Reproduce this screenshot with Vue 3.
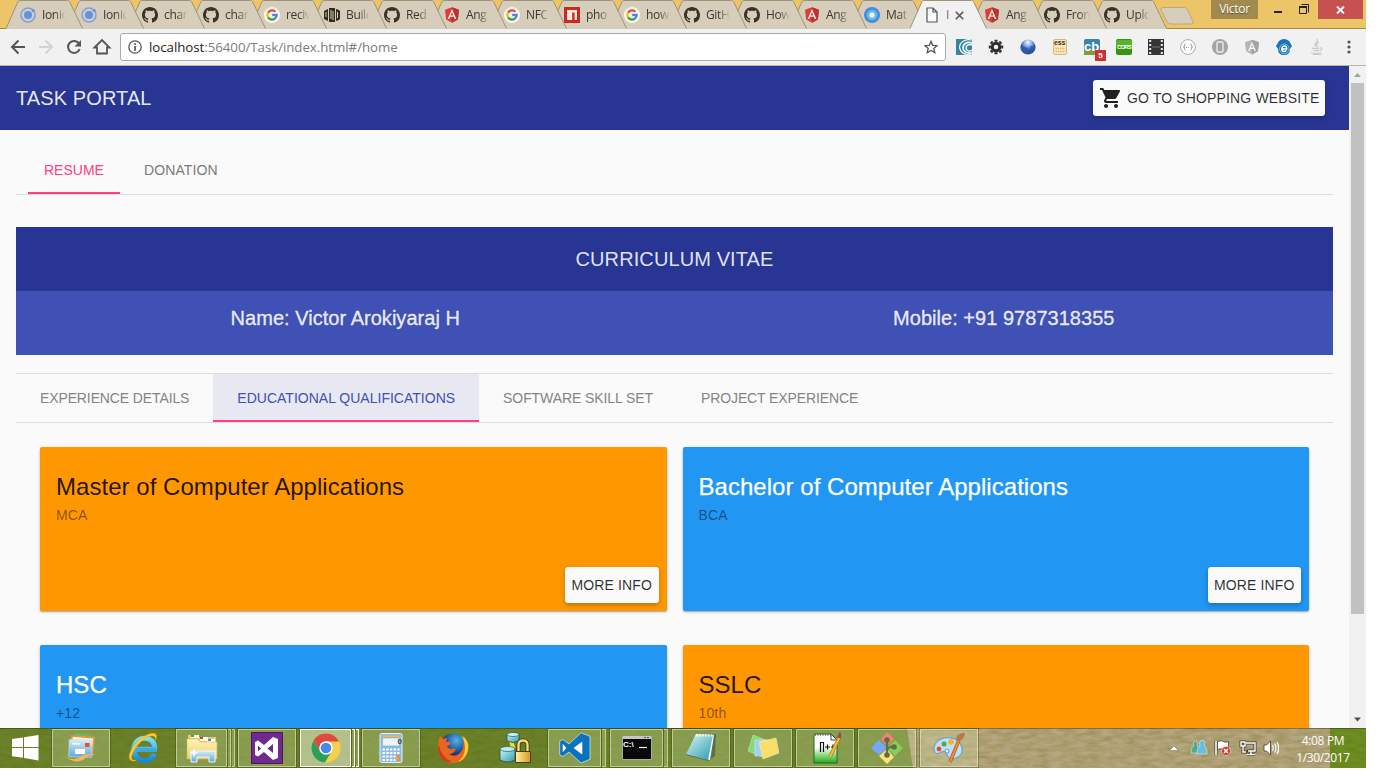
<script setup>
const tabs = [
  { icon: 'ionic', text: 'Ionic', w: 61 },
  { icon: 'ionic', text: 'Ionic', w: 61 },
  { icon: 'github', text: 'chart', w: 61 },
  { icon: 'github', text: 'chart', w: 61 },
  { icon: 'google', text: 'recive', w: 60 },
  { icon: 'build', text: 'Build', w: 60 },
  { icon: 'github', text: 'Red', w: 60 },
  { icon: 'angular', text: 'Ang', w: 60 },
  { icon: 'google', text: 'NFC', w: 60 },
  { icon: 'npm', text: 'pho', w: 60 },
  { icon: 'google', text: 'how', w: 60 },
  { icon: 'github', text: 'GitH', w: 60 },
  { icon: 'github', text: 'How', w: 60 },
  { icon: 'angular', text: 'Ang', w: 60 },
  { icon: 'material', text: 'Mat', w: 60 },
  { icon: 'page', text: 'I', w: 60, active: true },
  { icon: 'angular', text: 'Ang', w: 60 },
  { icon: 'github', text: 'Fron', w: 60 },
  { icon: 'github', text: 'Uplo', w: 60 }
]
const extensions = ['swirl', 'gear', 'globe', 'css', 'cb', 'cors', 'film', 'braces', 'phone', 'batshield', 'teamie', 'java']
const glyphs = { css: 'ess', cb: 'cb', cors: 'CORS', calc: '0', cmd: 'C:\\' }
const subTabs = [
  { text: 'EXPERIENCE DETAILS', ls: -0.12 },
  { text: 'EDUCATIONAL QUALIFICATIONS', ls: 0.01, on: true },
  { text: 'SOFTWARE SKILL SET', ls: -0.09 },
  { text: 'PROJECT EXPERIENCE', ls: -0.1 }
]
const cards = [
  { title: 'Master of Computer Applications', sub: 'MCA', tone: 'orange' },
  { title: 'Bachelor of Computer Applications', sub: 'BCA', tone: 'blue' },
  { title: 'HSC', sub: '+12', tone: 'blue' },
  { title: 'SSLC', sub: '10th', tone: 'orange' }
]
const apps = [
  { icon: 'mail', kind: 'open' },
  { icon: 'ie', kind: 'plain' },
  { icon: 'explorer', kind: 'open stack3' },
  { icon: 'vs', kind: 'open' },
  { icon: 'chrome', kind: 'open current stack3' },
  { icon: 'calc', kind: 'open' },
  { icon: 'firefox', kind: 'plain' },
  { icon: 'dblock', kind: 'plain' },
  { icon: 'vscode', kind: 'open stack' },
  { icon: 'cmd', kind: 'open stack' },
  { icon: 'notepad', kind: 'open' },
  { icon: 'sticky', kind: 'open' },
  { icon: 'npp', kind: 'open' },
  { icon: 'git', kind: 'open' },
  { icon: 'paint', kind: 'open' }
]
</script>

<template>
  <div class="desktop">
    <svg class="defs" width="0" height="0">
      <defs>
        <linearGradient id="gFolder" x1="0" y1="0" x2="0" y2="1"><stop offset="0" stop-color="#fff3b8" /><stop offset="1" stop-color="#f0cf6c" /></linearGradient>
        <linearGradient id="gIe" x1="0" y1="0" x2="0" y2="1"><stop offset="0" stop-color="#7ee0ff" /><stop offset="1" stop-color="#1588d6" /></linearGradient>
        <linearGradient id="gBlue" x1="0" y1="0" x2="0" y2="1"><stop offset="0" stop-color="#d5ecfa" /><stop offset="1" stop-color="#5ea7dc" /></linearGradient>
        <linearGradient id="gTeal" x1="0" y1="0" x2="1" y2="1"><stop offset="0" stop-color="#d6f6f7" /><stop offset="1" stop-color="#2a9aae" /></linearGradient>
        <linearGradient id="gGold" x1="0" y1="0" x2="1" y2="0"><stop offset="0" stop-color="#fff2a0" /><stop offset="1" stop-color="#d69a18" /></linearGradient>
        <linearGradient id="gNpp" x1="0" y1="0" x2="0" y2="1"><stop offset="0.45" stop-color="#fff" /><stop offset="1" stop-color="#1fae12" /></linearGradient>
        <radialGradient id="gGlobe" cx="0.5" cy="0.2"><stop offset="0" stop-color="#f4f8ff" /><stop offset="0.5" stop-color="#8fb0e8" /><stop offset="1" stop-color="#2a529f" /></radialGradient>
        <radialGradient id="gFox" cx="0.6" cy="0.25"><stop offset="0" stop-color="#4fb6e8" /><stop offset="1" stop-color="#12337d" /></radialGradient>
      </defs>
      <symbol id="i-ionic" viewBox="0 0 16 16"><circle cx="8" cy="8" r="7" fill="none" stroke="#7aa2e3" stroke-width="1.500" /><circle cx="8" cy="8" r="4" fill="#5e92e4" /><circle cx="13.200" cy="3.400" r="1.500" fill="#5e92e4" /></symbol>
      <symbol id="i-github" viewBox="0 0 16 16"><path fill="#3b3127" d="M8 0C3.58 0 0 3.58 0 8c0 3.54 2.29 6.53 5.47 7.59.4.07.55-.17.55-.38 0-.19-.01-.82-.01-1.49-2.01.37-2.53-.49-2.69-.94-.09-.23-.48-.94-.82-1.13-.28-.15-.68-.52-.01-.53.63-.01 1.08.58 1.23.82.72 1.21 1.87.87 2.33.66.07-.52.28-.87.51-1.07-1.78-.2-3.64-.89-3.64-3.95 0-.87.31-1.59.82-2.15-.08-.2-.36-1.02.08-2.12 0 0 .67-.21 2.2.82.64-.18 1.32-.27 2-.27s1.36.09 2 .27c1.53-1.04 2.2-.82 2.2-.82.44 1.1.16 1.92.08 2.12.51.56.82 1.27.82 2.15 0 3.07-1.87 3.75-3.65 3.95.29.25.54.73.54 1.48 0 1.07-.01 1.93-.01 2.2 0 .21.15.46.55.38A8.01 8.01 0 0 0 16 8c0-4.42-3.58-8-8-8z" /></symbol>
      <symbol id="i-google" viewBox="0 0 16 16"><circle cx="8" cy="8" r="8" fill="#fbf6ea" /><g fill="none" stroke-width="2.300"><path d="M4 5.700A4.700 4.700 0 0 1 11.400 4.700" stroke="#e5483b" /><path d="M4 5.600A4.700 4.700 0 0 0 4 10.400" stroke="#f4b912" /><path d="M4 10.300A4.700 4.700 0 0 0 11 11.500" stroke="#37a354" /><path d="M11 11.500A4.700 4.700 0 0 0 12.700 8H8.200" stroke="#4484ee" /></g></symbol>
      <symbol id="i-build" viewBox="0 0 16 16"><path fill="#33291d" d="M0 4l4-2v12l-4-2zM5 1h6v14H5zM12 2l3 1 1 1v8l-1 1-3 1z" /><path stroke="#d6cdba" fill="none" d="M2 5v5M7 3v9M9 4v9M13.500 5v6" /></symbol>
      <symbol id="i-angular" viewBox="0 0 16 16"><path fill="#dd3d39" d="M8 .3l7 2.500-1.100 9.600L8 15.800l-5.900-3.400L1 2.800z" /><path fill="#b93431" d="M8 .3l7 2.500-1.100 9.600L8 15.800z" /><path fill="#f7e9e2" fill-rule="evenodd" d="M8 2L3.600 12h1.700l.9-2.200h3.600l.9 2.200h1.700zM8 5.300l1.200 3.100H6.800z" /></symbol>
      <symbol id="i-npm" viewBox="0 0 16 16"><path fill="#d0271d" d="M0 0h16v16H0z" /><path fill="#f7ebdf" d="M3 3h10v10h-2.400V5.400H8.200V13H3z" /></symbol>
      <symbol id="i-material" viewBox="0 0 16 16"><circle cx="8" cy="8" r="8" fill="#4989e4" /><circle cx="8" cy="8" r="5.300" fill="#5bc0ea" /><circle cx="8" cy="8" r="2.600" fill="#f7f1dd" /></symbol>
      <symbol id="i-page" viewBox="0 0 16 16"><path d="M3.500 1.500h6l4 4v10h-10zM9.500 1.500v4h4" transform="translate(-.5 -.5)" fill="#fafafa" stroke="#555" stroke-width="1.200" /></symbol>

      <symbol id="i-swirl" viewBox="0 0 16 16"><path fill="#35859c" d="M0 0h16v16H0z" /><g fill="none" stroke="#f1f8fa"><path d="M16 1C8-1 2 5 4 10c1 4 6 6 12 6" stroke-width="1.200" /><path d="M16 4c-5-2-9 1-9 5 0 3 4 6 9 5" stroke-width="1.700" /><path d="M16 6c-3-1-6 0-6 3s4 4 6 2" stroke-width="1.500" /></g></symbol>
      <symbol id="i-gear" viewBox="0 0 16 16"><g stroke="#2d2d2d"><circle cx="8" cy="8" r="3.800" fill="none" stroke-width="3" /><path stroke-width="3" d="M8 .8v2M8 13.200v2M.8 8h2M13.200 8h2M2.900 2.900l1.400 1.400M11.700 11.700l1.400 1.400M2.900 13.100l1.400-1.400M11.700 4.300l1.400-1.400" /></g></symbol>
      <symbol id="i-globe" viewBox="0 0 16 16"><circle cx="8" cy="8" r="7.600" fill="url(#gGlobe)" /><path fill="#2f5db0" opacity=".7" d="M1 8q2-2 4 0l3 1 1 3-2 3Q1 14 1 8zM10 7l4 0 1 2-3 3-2-2z" /></symbol>
      <symbol id="i-css" viewBox="0 0 16 16"><rect x="1.500" y=".5" width="13" height="15" rx="1.500" fill="#fbe7b8" stroke="#d3b77f" /><path stroke="#d9b57a" stroke-width="1.600" stroke-dasharray="1.500 .8" d="M3.500 9.500h9.500M3.500 12.500h9.500" /></symbol>
      <symbol id="i-cb" viewBox="0 0 16 16"><rect width="16" height="16" rx="2" fill="#3c83a9" /><path fill="#7e9d3f" d="M0 10l16 1v3l-2 2H0z" /></symbol>
      <symbol id="i-cors" viewBox="0 0 16 16"><rect width="16" height="16" rx="2" fill="#36950b" /><rect y="1" width="16" height="7" rx="2" fill="#57b52d" /></symbol>
      <symbol id="i-film" viewBox="0 0 16 16"><path fill="#353535" d="M0 0h16v16H0z" /><path stroke="#eee" stroke-width="2" stroke-dasharray="2 2" d="M2.200 1v15M13.800 1v15" /><path stroke="#777" d="M4 8h8" /></symbol>
      <symbol id="i-braces" viewBox="0 0 16 16"><circle cx="8" cy="8" r="7.400" fill="#fff" stroke="#aaa" /><path fill="none" stroke="#999" d="M5.700 5q-1.500 0-1.200 1.700Q4.700 8 3.300 8q1.400 0 1.200 1.300Q4.200 11 5.700 11M10.300 5q1.500 0 1.200 1.700Q11.300 8 12.700 8q-1.400 0-1.200 1.300.3 1.700-1.200 1.700" /><path stroke="#999" stroke-dasharray="1 1" d="M6 8.500h4" /></symbol>
      <symbol id="i-phone" viewBox="0 0 16 16"><circle cx="8" cy="8" r="8" fill="#a4a4a4" /><rect x="5" y="3" width="6" height="10" rx="1" fill="#a4a4a4" stroke="#eee" stroke-width="1.300" /></symbol>
      <symbol id="i-batshield" viewBox="0 0 16 16"><path fill="#b5b5b5" d="M8 .8l7 2.400-1.100 9L8 15.600l-5.900-3.400L1 3.200z" /><path fill="#a4a4a4" d="M8 .8l7 2.400-1.100 9L8 15.600z" /><path fill="#f5f5f5" fill-rule="evenodd" d="M8 2.700L4 12h1.500l.8-2h3.400l.8 2H12zM8 5.800l1.100 2.800H6.900z" /></symbol>
      <symbol id="i-teamie" viewBox="0 0 16 16"><path fill="#1675bd" d="M3 2Q8-2 13 2l3 5-2 3q0 6-6 6t-6-6L0 7z" /><circle cx="8.300" cy="9.800" r="4.800" fill="#1675bd" stroke="#e8f4fd" stroke-width=".5" /><path d="M5.800 10.100h4.900q.2-3-2.200-3t-2.700 3q0 2.500 2.600 2.300 1.400 0 2.100-1" fill="none" stroke="#fff" stroke-width="1.500" /></symbol>
      <symbol id="i-java" viewBox="0 0 16 16"><g fill="none" stroke="#c9c9c9" stroke-width="1.200"><path d="M8.800 0q1.500 2-.8 4-2 1.700 0 4M11 3Q7 5 9.600 8M4 9q3 1 7.500 0M5 11.300q2.500.8 6 0M3 13.500q4.500 1.800 10.200 0M12 9q2-.5 1.800 1-.2 1-2 1.600M5 15.500q5 .5 9-.5" /></g></symbol>

      <symbol id="i-mail" viewBox="0 0 32 32"><path fill="#66bd5a" d="M10 1l20 3-3 17L8 18z" /><path fill="#fff3df" stroke="#f1953b" stroke-width="1.600" d="M7 4l22 2-2 17L6 21z" /><rect x="4" y="8" width="23" height="17" fill="url(#gBlue)" stroke="#b9dcf5" stroke-width=".7" transform="rotate(2 16 16)" /><path fill="#fff" d="M10 17h10v5H10zM7 11h8v1.500H7z" /><path fill="#e2571e" d="M20 11h4.500v4H20z" /><path d="M1 25q8 4 14 0t16-3q-7 1-13 6-8 4-17-3z" fill="#f3b45f" /></symbol>
      <symbol id="i-ie" viewBox="0 0 32 32"><path d="M7.200 17.200h20.400c.8-6.500-3.800-11-10-11S6.800 11 6.800 17.200s4.700 11.300 10.700 11.300c5 0 8.500-2.800 9.700-6.500" fill="none" stroke="url(#gIe)" stroke-width="5" /><path d="M8.500 18h20.800" stroke="#3aa8e2" stroke-width="3.600" /><path d="M8 29C1 30 0 23 7 13.500S26-1 29 2.400q1.600 2-.8 6.100 1-4.500-2.600-4.500C20 3.500 11 11 7 18.500 3 26 4 29 9.500 28z" fill="#fdc92d" stroke="#e6a91d" stroke-width=".4" /></symbol>
      <symbol id="i-explorer" viewBox="0 0 32 32"><path fill="#e9c873" d="M2 3h9l2 2h17v6H2z" /><path fill="#fdfdf4" d="M5 3h8v3H5zM14 5h8v4h-8zM21 7h8v3h-8z" /><path fill="#2db42c" d="M5 3h3v2H5z" /><path fill="#dc3b2b" d="M14 5h3v2h-3z" /><path fill="#3b86dc" d="M22 7h3v2h-3z" /><path d="M1 7h11l2 3h17v17H1z" fill="url(#gFolder)" stroke="#dab95f" stroke-width=".6" /><path d="M5 19h24v11h-6v-5H11v5H5z" fill="url(#gBlue)" stroke="#eff8fd" /><path d="M8 16l1 4 4 1-4 1-1 4-1-4-4-1 4-1z" fill="#fff" /></symbol>
      <symbol id="i-vs" viewBox="0 0 32 32"><path fill="#702a8e" stroke="#481764" d="M.5.5h31v31H.5z" /><path fill="#fff" fill-rule="evenodd" d="M22 5l5 2v19l-5 2-9-8-6 4.500-3-1.500v-13l3-1.500 6 4.500zM22 12l-5.500 4.500L22 21zM7 13.500v6l3-3z" /></symbol>
      <symbol id="i-chrome" viewBox="0 0 32 32"><circle cx="16" cy="16" r="14.500" fill="#f8cf48" /><path fill="#dd4a3e" d="M3.500 8.600A14.500 14.500 0 0 1 29 9.500H16L9.800 19.500z" /><path fill="#28a05b" d="M3.400 8.700A14.500 14.500 0 0 0 14.800 30.500L21.700 19.200 10 19z" /><circle cx="16" cy="16" r="6.800" fill="#fff" /><circle cx="16" cy="16" r="5.300" fill="#4b89e9" /></symbol>
      <symbol id="i-calc" viewBox="0 0 32 32"><rect x="5" y="1.500" width="22" height="29" rx="1.500" fill="#8dbbe5" stroke="#e4f2ff" /><path fill="#f8b45a" d="M7.500 3.500h17v2h-17z" /><path fill="#edf5fa" stroke="#7ba4c8" stroke-width=".6" d="M7.500 6h17v8h-17z" /><path stroke="#fff" stroke-width="2.200" stroke-dasharray="2.500 1.200" d="M7.500 17.500h17M7.500 21h17M7.500 24.500h13M7.500 28h13" /><path fill="#f0922c" d="M22 23h3v6h-3z" /></symbol>
      <symbol id="i-firefox" viewBox="0 0 32 32"><circle cx="16.500" cy="15.500" r="14" fill="url(#gFox)" /><path fill="#ea651e" d="M3 4q2 1 3 3 2-1 4-1-1 2-1 4h5q-1 3-4 4 1 3 4 3 2-1 5 0-2 5-7 5 6 4 11-1t3-15q5 5 5 11c0 9-7 14-15 14C7 31 1 25 1 17Q1 9 3 4z" /><path fill="#fbcf35" d="M26 4q8 7 4 17-3 7-9 9 7-6 7-14 0-7-4-12 2 1 3 3z" /><path fill="#c63f1b" d="M2 13q2 12 13 17Q3 31 1 18z" /></symbol>
      <symbol id="i-dblock" viewBox="0 0 32 32"><path d="M12 9l2 6-5 2" stroke="#f0dd30" stroke-width="4" fill="none" /><path d="M8 2v7q6 3 12 0V2z" fill="url(#gTeal)" stroke="#224f52" stroke-width=".8" /><ellipse cx="14" cy="2.500" rx="6" ry="2" fill="#c8f1ef" stroke="#25565a" stroke-width=".7" /><path d="M1 17v11q8 4 15 0V17z" fill="url(#gTeal)" stroke="#224f52" stroke-width=".8" /><ellipse cx="8.500" cy="17" rx="7.500" ry="2.500" fill="#b9edeb" stroke="#25565a" stroke-width=".7" /><path d="M19.500 19v-6q0-4.500 4.500-4.500t4.500 4.500v6" fill="none" stroke="#40320c" stroke-width="4" /><path d="M19.500 19v-6q0-4.500 4.500-4.500t4.500 4.500v6" fill="none" stroke="#f4dc77" stroke-width="2.400" /><path d="M16.500 19.500h15v11h-15z" fill="url(#gGold)" stroke="#503c08" /></symbol>
      <symbol id="i-vscode" viewBox="0 0 32 32"><path fill="#0b73be" stroke="#dceef8" stroke-width=".7" fill-rule="evenodd" d="M22 .8l9 3.500v23L22 31 10 20l-6 4.500-3.300-1.700V9.200L4 7.500l6 4.500zM23 10l-8 6 8 6zM4 12.500v7l3-3.500z" /><path fill="#fff" d="M23 10l-8 6 8 6zM4 12.500v7l3-3.500z" /></symbol>
      <symbol id="i-cmd" viewBox="0 0 32 32"><path fill="#090909" stroke="#aaa" d="M1.500 4.500h29v23h-29z" /><path fill="#c6c6c6" d="M2 4h28v3H2z" /><path fill="#555" d="M23 5h2v1h-2zM26 5h2v1h-2z" /><path stroke="#fff" stroke-width="1.200" d="M18 15.500h8" /></symbol>
      <symbol id="i-notepad" viewBox="0 0 32 32"><path fill="#39544d" d="M12 4l19-2-1 22-7 5-22-6z" opacity=".6" /><path fill="#fff" d="M11 2l18 1-4 25-23-6z" /><path d="M11 3h17l-5 25L1 22z" fill="url(#gTeal)" /><path stroke="#fff" stroke-width="2" stroke-dasharray="1.500 1.500" d="M11 3.500h17" /></symbol>
      <symbol id="i-sticky" viewBox="0 0 32 32"><path fill="#89d978" d="M6 3l15 6-5 16L1 19z" stroke="#c7f4b9" stroke-width=".5" /><path fill="#9ccffd" d="M8 8h14v16H8z" stroke="#dff2ff" stroke-width=".5" /><path fill="#f8df68" d="M12 10l17-4 3 15-16 6z" stroke="#fff5b4" stroke-width=".5" /></symbol>
      <symbol id="i-npp" viewBox="0 0 32 32"><path d="M5 2h17l6 6v23H5z" fill="url(#gNpp)" stroke="#262" /><path fill="#fff" stroke="#444" d="M22 2v6h6z" /><path stroke="#555" stroke-width="1.400" stroke-dasharray="1 1.500" d="M6 3h16" /><path d="M11.500 20v-9.500h3V20M16 15h5M18.500 12.500v5M22 15h4M24 12.500v5" fill="none" stroke="#111" stroke-width="1.200" /><path d="M31 4L21 25" stroke="#b76d16" stroke-width="3.600" /><path d="M31 4L21 25" stroke="#f7bd32" stroke-width="2.200" /><path d="M32 1l-2 5" stroke="#904d59" stroke-width="4" /></symbol>
      <symbol id="i-git" viewBox="0 0 32 32"><path fill="#f97f77" d="M16 0l7 7-7 7-6-7z" /><path fill="#77a7fb" d="M8 8l8 8-8 7-8-7z" /><path fill="#83cf59" d="M24 8l8 8-8 8-8-8z" /><path fill="#fbe278" d="M16 17l7 8-7 7-8-8z" /><g stroke="#5e7045" stroke-width="2.200" fill="#5e7045"><path d="M16 9v15M16 18q1-3 7-4" fill="none" /><circle cx="16" cy="8" r="1.700" /><circle cx="16" cy="23" r="1.700" /><circle cx="23" cy="15" r="1.700" /></g></symbol>
      <symbol id="i-paint" viewBox="0 0 32 32"><path d="M18 6C8 4 0 11 1 18q2 6 7 2 5-2 6 3 3 7 11 2 5-3 4-9-2-9-11-10z" fill="#bee0f7" stroke="#579bc6" /><circle cx="11" cy="12" r="2.500" fill="#4dad47" /><circle cx="6" cy="17" r="2.400" fill="#e34a37" /><circle cx="18" cy="10" r="2.800" fill="#f0b331" /><circle cx="14" cy="19" r="2" fill="#f1f6fa" stroke="#579bc6" /><path d="M26 8L17 30" stroke="#b94d0d" stroke-width="3.400" /><path d="M26 8L17 30" stroke="#f28d35" stroke-width="2" /><path d="M23 7q1-7 9-6-1 7-7 8z" fill="#b47b49" /></symbol>
    </svg>

    <header class="tabstrip">
      <div v-for="(t, i) in tabs" :key="i" class="tab" :class="{ active: t.active }" :style="{ width: t.w + 'px', zIndex: t.active ? 40 : 30 - i }">
        <svg class="shape" width="78" height="29" viewBox="0 0 78 29">
          <path class="fill" d="M0 28.500L12 1.500Q12.500.5 14 .5H61.500Q63 .5 63.500 1.500L76.500 28.500V29H0z" />
          <path class="edge" d="M0 28.500L12 1.500Q12.500.5 14 .5H61.500Q63 .5 63.500 1.500L76.500 28.500" />
        </svg>
        <svg class="fav" width="16" height="16"><use :href="'#i-' + t.icon" /></svg>
        <span class="label">{{ t.text }}</span>
        <svg v-if="t.active" class="tab-close" width="9" height="9" viewBox="0 0 9 9"><path d="M.8.8l7.400 7.400M8.200.8L.8 8.200" stroke="#555" stroke-width="1.600" /></svg>
      </div>
      <svg class="newtab" width="36" height="18" viewBox="0 0 36 18"><path d="M2.500.5h22q2 0 3 2L33 15q.8 2-1.500 2H11q-3 0-4-2L1 3Q.3.5 2.500.5z" fill="#d6cdba" stroke="#bda86f" /></svg>
      <div class="win">
        <span class="user">Victor</span>
        <svg class="minmax" width="60" height="19" viewBox="0 0 60 19"><path fill="#222" d="M16 11h8v2h-8z" /><path fill="none" stroke="#222" d="M43.500 4.500h7v8M41.500 7.500h7v6h-7z" /><path fill="#222" d="M41 6h8v2h-8z" /></svg>
        <span class="close"><svg width="9" height="8" viewBox="0 0 9 8"><path d="M1 .5l7 7M8 .5l-7 7" stroke="#fff" stroke-width="1.900" /></svg></span>
      </div>
    </header>

    <div class="toolbar">
      <svg class="nav" width="120" height="36" viewBox="0 0 120 36">
        <g fill="none" stroke-width="2"><path stroke="#555" d="M25 18H12.500M18.500 11.500L12 18l6.500 6.500" /><path stroke="#d2d2d2" d="M39 18h12.500M45.500 11.500L52 18l-6.500 6.500" /><path stroke="#555" d="M79 14.500A6 6 0 1 0 79.700 20" /><path stroke="#555" stroke-width="1.800" d="M94.500 18.500L102 11l7.500 7.500H107v6H97v-6z" /></g>
        <path fill="#555" d="M81 11v6.500h-6.500z" />
      </svg>
      <div class="omnibox">
        <svg width="14" height="14" viewBox="0 0 14 14"><circle cx="7" cy="7" r="6.200" fill="none" stroke="#555" stroke-width="1.300" /><path fill="#555" d="M6.200 3.300h1.700v1.700H6.200zM6.200 6h1.700v4.700H6.200z" /></svg>
        <span class="url"><b>localhost</b>:56400/Task/index.html#/home</span>
        <svg class="star" width="14" height="14" viewBox="0 0 14 14"><path d="M7 1.300l1.700 4 4.300.4-3.200 2.800 1 4.200L7 10.500l-3.800 2.200 1-4.200L1 5.700l4.300-.4z" fill="none" stroke="#555" stroke-width="1.300" /></svg>
      </div>
      <div class="exts">
        <span v-for="e in extensions" :key="e" class="ext"><svg width="16" height="16"><use :href="'#i-' + e" /></svg><em v-if="glyphs[e]" class="glyph" :class="'g-' + e">{{ glyphs[e] }}</em><i v-if="e === 'cb'" class="count">5</i></span>
      </div>
      <svg class="kebab" width="4" height="14" viewBox="0 0 4 14"><g fill="#555"><circle cx="2" cy="2" r="1.600" /><circle cx="2" cy="7" r="1.600" /><circle cx="2" cy="12" r="1.600" /></g></svg>
    </div>

    <div class="view">
      <main class="page">
        <div class="appbar">
          <h1>TASK PORTAL</h1>
          <button class="raised shop">
            <svg width="24" height="24" viewBox="0 0 24 24"><path fill="#212121" d="M7 18c-1.100 0-1.990.9-1.990 2S5.900 22 7 22s2-.9 2-2-.9-2-2-2zM1 2v2h2l3.600 7.590-1.350 2.450c-.16.28-.25.61-.25.96 0 1.100.9 2 2 2h12v-2H7.420c-.14 0-.25-.11-.25-.25l.03-.12.9-1.630h7.450c.75 0 1.410-.41 1.750-1.030l3.580-6.490A1.003 1.003 0 0 0 20 4H5.210l-.94-2H1zm16 16c-1.100 0-1.990.9-1.990 2s.89 2 1.990 2 2-.9 2-2-.9-2-2-2z" /></svg>
            <span>GO TO SHOPPING WEBSITE</span>
          </button>
        </div>
        <nav class="main-tabs"><a class="on">RESUME</a><a class="donation">DONATION</a></nav>
        <section class="cv">
          <div class="cv-title">CURRICULUM VITAE</div>
          <div class="cv-info"><span>Name: Victor Arokiyaraj H</span><span>Mobile: +91 9787318355</span></div>
        </section>
        <nav class="sub-tabs"><a v-for="s in subTabs" :key="s.text" :class="{ on: s.on }" :style="{ letterSpacing: s.ls + 'px' }">{{ s.text }}</a></nav>
        <section class="cards">
          <article v-for="c in cards" :key="c.title" class="card" :class="c.tone">
            <h2>{{ c.title }}</h2>
            <p>{{ c.sub }}</p>
            <button class="raised more">MORE INFO</button>
          </article>
        </section>
      </main>
      <aside class="scroll">
        <svg width="17" height="17" viewBox="0 0 17 17"><path fill="#a3a3a3" d="M5 11l3.500-4 3.500 4z" /></svg>
        <div class="thumb"></div>
        <svg class="down" width="17" height="17" viewBox="0 0 17 17"><path fill="#505050" d="M5 6.500h7l-3.500 4z" /></svg>
      </aside>
    </div>

    <footer class="taskbar">
      <svg class="grain" width="1366" height="40">
        <filter id="fNoise" x="0" y="0" width="100%" height="100%"><feTurbulence type="fractalNoise" baseFrequency="0.08 0.25" numOctaves="3" seed="4" /><feColorMatrix values="0 0 0 0 0.1  0 0 0 0 0.12  0 0 0 0 0  1.200 0 0 0 -0.35" /></filter>
        <path fill="#6b822c" d="M0 0h1366v40H0z" /><path fill="#b7a680" d="M907 0h423v40H913z" /><path fill="#6d8f24" d="M1330 0h36v40h-36z" />
        <rect width="1366" height="40" filter="url(#fNoise)" opacity=".42" />
        <path fill="#000" opacity=".3" d="M0 0h1366v1H0z" />
      </svg>
      <div class="start"><svg width="27" height="26" viewBox="0 0 27 26"><path fill="#fff" d="M0 4l11-1.600V12H0zM12 2.200L26.500 0v12H12zM0 13h11v9.800L0 21.200zM12 13h14.500v12.500L12 23z" /></svg></div>
      <div v-for="a in apps" :key="a.icon" class="slot" :class="a.kind">
        <div class="face"><svg width="32" height="32"><use :href="'#i-' + a.icon" /></svg></div>
        <em v-if="glyphs[a.icon]" class="glyph" :class="'g-' + a.icon">{{ glyphs[a.icon] }}</em>
        <i class="e1"></i><i class="e2"></i>
      </div>
      <div class="tray">
        <svg width="110" height="20" viewBox="0 0 110 20">
          <path d="M.5 12.500L5 8l4.500 4.500z" fill="#fff" stroke="#777" stroke-width=".6" />
          <g stroke="#eefaf5" stroke-width=".5"><path fill="#4ea98d" d="M26 3a2.500 3 0 0 1 2 5q3 1 3 7h-9q0-6 3-7-2-3 1-5z" /><path fill="#68bce3" d="M33 2a3 3.500 0 0 1 2 6q3 1 3 8h-10q0-7 3-8-2-4 2-6z" /></g>
          <path d="M47 3v14" stroke="#443c2c" stroke-width="3" /><path d="M47 3v14" stroke="#fff" stroke-width="1.600" /><path fill="#fff" stroke="#443c2c" stroke-width=".8" d="M48.500 3.500q4-1.500 6 0t5 0v8q-3 1.500-5 0t-6 0z" /><circle cx="57" cy="13" r="4.500" fill="#d8322b" stroke="#fff" stroke-width=".5" /><path d="M55 11l4 4M59 11l-4 4" stroke="#fff" stroke-width="1.600" />
          <g fill="none" stroke="#443c2c" stroke-width="3"><path d="M78 5h8v8h-8M82 13v3M78 16.500h8M72 4h4v4h-4zM74 8v6h4" /></g><g fill="none" stroke="#fff" stroke-width="1.400"><path d="M77 5h9v8h-7M82 13v3M78 16.500h8M72 4h4v4h-4zM74 8v6h3" /></g>
          <path d="M95 7h2.500l4-4v14l-4-4H95z" fill="#fff" stroke="#443c2c" stroke-width=".8" /><path d="M103.500 7q1.500 3 0 6M105.700 5.500q2.500 4.500 0 9M108 4q3.300 6 0 12" fill="none" stroke="#fff" stroke-width="1.200" />
        </svg>
      </div>
      <div class="clock"><span>4:08 PM</span><span>1/30/2017</span></div>
    </footer>
  </div>
</template>

<style>
body { background: #fff; overflow: hidden; }
</style>

<style scoped>
.desktop { width: 1366px; height: 768px; display: flex; flex-direction: column; overflow: hidden; position: relative; font-family: "Liberation Sans", Arial, sans-serif; }
.defs { position: absolute; }
svg { display: block; flex: none; }
.tabstrip { height: 29px; flex: none; background: #ecc569; display: flex; padding-left: 6px; box-sizing: border-box; box-shadow: inset 0 -1px #a68445; position: relative; isolation: isolate; overflow: hidden; }
.tab { position: relative; flex: none; height: 29px; display: flex; align-items: center; padding: 0 0 0 14px; box-sizing: border-box; font: 12px "Open Sans", sans-serif; }
.shape { position: absolute; left: 0; top: 0; }
.shape .fill { fill: #d6cdba; }
.shape .edge { fill: none; stroke: #a09078; stroke-width: 1; }
.active .shape .fill { fill: #f2f1f2; }
.fav { position: relative; margin-top: 1px; }
.label { position: relative; width: 25px; margin: 0 -12px 0 6px; flex: none; overflow: hidden; white-space: nowrap; letter-spacing: -.35px; color: #3d372d; -webkit-mask-image: linear-gradient(90deg, #000 50%, transparent 95%); mask-image: linear-gradient(90deg, #000 50%, transparent 95%); }
.active .label { width: 4px; margin-right: 0; -webkit-mask-image: none; mask-image: none; color: #8b5b86; }
.tab-close { position: relative; margin-left: 5px; margin-top: 1px; }
.newtab { margin: 7px 0 0 10px; }
.win { margin-left: auto; display: flex; margin-right: 3px; }
.user { width: 47px; height: 19px; background: #a2894d; color: #fff; font: 12px/18px "Open Sans", sans-serif; letter-spacing: -.3px; text-align: center; text-shadow: 0 1px 1px #553; }
.close { width: 45px; height: 19px; background: #c75050; display: grid; place-items: center; }
.toolbar { height: 37px; flex: none; box-sizing: border-box; background: #f2f1f2; border-bottom: 1px solid #b6b4b6; display: flex; align-items: center; }
.omnibox { width: 826px; height: 28px; box-sizing: border-box; margin-top: -1px; border: 1px solid #a9a9a9; border-radius: 3px; background: #fff; display: flex; align-items: center; padding: 0 7px; font: 13.300px "Open Sans", sans-serif; letter-spacing: -.05px; color: #7c7c7c; }
.url { margin-left: 7px; white-space: nowrap; }
.url b { font-weight: 400; color: #222; }
.star { margin-left: auto; }
.exts { display: flex; gap: 16px; margin-left: 10px; }
.ext { position: relative; width: 16px; height: 16px; }
.glyph { position: absolute; font: 700 8px/8px "Liberation Sans", Arial, sans-serif; white-space: nowrap; }
.g-css { left: 2px; top: 0; font-size: 7px; color: #403018; letter-spacing: -.2px; }
.g-cb { left: 0; top: 1px; font-size: 13px; line-height: 13px; color: #fff; }
.g-cors { left: 1px; top: 4px; font-size: 6px; color: #fff; letter-spacing: -.9px; }
.g-calc { right: 20px; top: 10px; color: #345; }
.g-cmd { left: 15px; top: 13px; color: #fff; }
.count { position: absolute; left: 11px; top: 11px; width: 11px; height: 11px; background: #d32f2f; color: #fff; font: 700 8px/11px "Liberation Sans", sans-serif; text-align: center; }
.kebab { margin-left: 23px; }
.view { height: 662px; flex: none; display: flex; overflow: hidden; }
.page { width: 1349px; flex: none; background: #fafafa; }
.appbar { height: 64px; background: #283593; display: flex; align-items: center; justify-content: space-between; padding: 0 24px 0 16px; }
h1 { margin: 0; font-size: 20px; font-weight: 400; color: rgba(255,255,255,.9); letter-spacing: .1px; }
.raised { border: 0; border-radius: 3px; background: #fafafa; height: 36px; padding: 0 6px; color: rgba(0,0,0,.82); font: 14px "Liberation Sans", Arial, sans-serif; letter-spacing: .14px; box-shadow: 0 2px 5px rgba(0,0,0,.26); white-space: nowrap; }
.shop { display: flex; align-items: center; width: 232px; gap: 4px; }
.main-tabs { margin: 16px 16px 0; height: 48px; border-bottom: 1px solid #dcdcdc; padding-left: 12px; display: flex; gap: 8px; }
.main-tabs a { padding: 0 16px; line-height: 48px; font-size: 14px; color: #7a7a7a; }
.main-tabs .donation { letter-spacing: .12px; }
.main-tabs .on { color: #ff4081; box-shadow: inset 0 -2px #ff4081; }
.cv { margin: 32px 16px 0; color: rgba(255,255,255,.87); font-size: 20px; letter-spacing: .1px; }
.cv-title { height: 64px; line-height: 64px; background: #283593; text-align: center; }
.cv-info { height: 64px; line-height: 54px; background: #3f51b5; display: flex; letter-spacing: .03px; -webkit-text-stroke: .35px rgba(255,255,255,.8); }
.cv-info span { flex: 1; text-align: center; }
.sub-tabs { margin: 18px 16px 0; border-top: 1px solid #dcdcdc; border-bottom: 1px solid #dcdcdc; height: 48px; display: flex; }
.sub-tabs a { padding: 0 24px; line-height: 48px; font-size: 14px; color: #848484; }
.sub-tabs .on { color: #3f51b5; background: #e8e8f3; box-shadow: inset 0 -2px #ff4081; }
.cards { margin: 24px 40px 0; display: grid; grid-template-columns: 1fr 1fr; column-gap: 16px; row-gap: 34px; }
.card { height: 164px; box-sizing: border-box; border-radius: 2px; box-shadow: 0 1px 3px rgba(0,0,0,.25), 0 1px 1px rgba(0,0,0,.16); padding: 24px 8px 8px 16px; display: flex; flex-direction: column; }
.orange { background: #ff9800; }
.blue { background: #2196f3; }
h2 { margin: 0; font-size: 24px; line-height: 32px; font-weight: 400; color: rgba(0,0,0,.87); letter-spacing: .04px; }
.blue h2 { color: #fff; -webkit-text-stroke: .25px #fff; }
p { margin: 0; font-size: 14px; line-height: 24px; color: rgba(0,0,0,.48); letter-spacing: .14px; }
.more { width: 93.500px; margin-top: auto; align-self: flex-end; }
.scroll { width: 17px; background: #f1f1f1; display: flex; flex-direction: column; align-items: center; }
.thumb { width: 13px; height: 531px; background: #c1c1c1; }
.down { margin-top: auto; }
.taskbar { height: 40px; flex: none; position: relative; display: flex; overflow: hidden; }
.grain { position: absolute; left: 0; top: 0; }
.start { width: 50px; box-sizing: border-box; position: relative; display: flex; align-items: center; padding-left: 12px; }
.slot { width: 62px; height: 40px; position: relative; display: flex; padding: 1px 0 1px 2px; box-sizing: border-box; gap: 1px; flex: none; }
.face { width: 58px; flex: none; display: grid; place-items: center; box-sizing: border-box; }
.slot i { display: none; width: 4px; box-sizing: border-box; flex: none; }
.open .face { border: 1px solid rgba(238,243,210,.55); background: rgba(220,232,180,.28); box-shadow: 0 0 0 1px rgba(40,50,10,.3); }
.stack .face { width: 53px; }
.stack .e1, .stack3 .e1, .stack3 .e2 { display: block; border: 1px solid rgba(238,243,210,.55); border-left: 0; background: rgba(220,232,180,.3); }
.stack3 .face { width: 51px; }
.stack3 i { width: 3px; }
.current .face { border-color: #fff; background: rgba(240,245,220,.55); }
.current .e1, .current .e2 { border-color: #fff; }
.tray { position: relative; margin-left: auto; display: flex; align-items: center; }
.clock { position: relative; width: 68px; margin: 0 9px 0 10px; padding-top: 4px; box-sizing: border-box; display: flex; flex-direction: column; text-align: center; color: #fff; font: 12px/17px "Open Sans", sans-serif; letter-spacing: -.35px; }
</style>
